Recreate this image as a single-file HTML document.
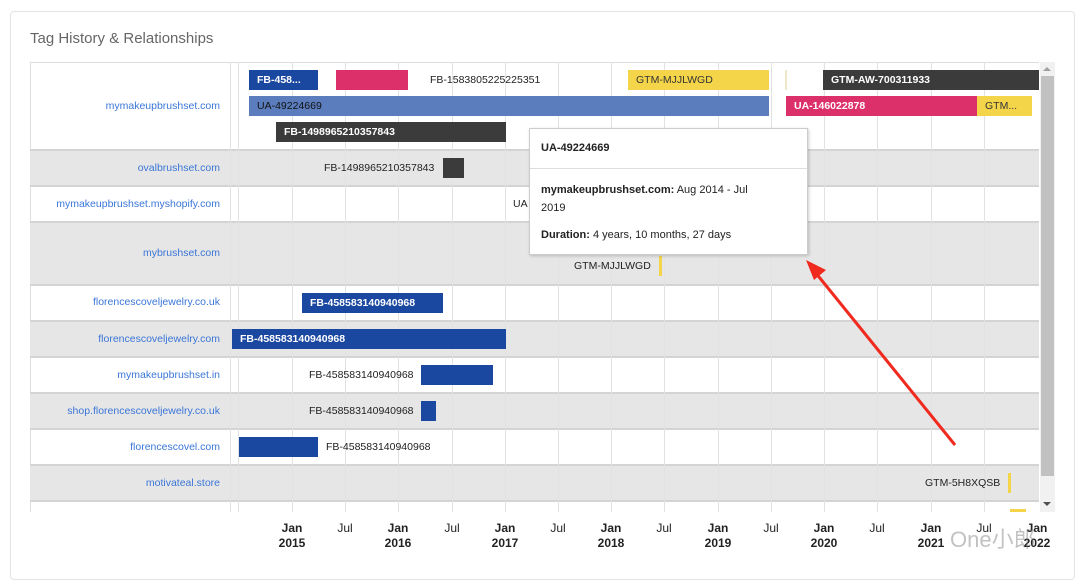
<!DOCTYPE html>
<html><head><meta charset="utf-8"><style>
*{margin:0;padding:0;box-sizing:border-box}
body{width:1080px;height:585px;background:#fff;font-family:"Liberation Sans",Arial,sans-serif;position:relative;overflow:hidden}
.a{position:absolute}
.card{left:10px;top:11px;width:1065px;height:569px;border:1px solid #e3e3e3;border-radius:4px}
.title{left:30px;top:30px;font-size:15px;color:#666}
.row{position:absolute;left:30px;width:1009px;border-bottom:2px solid #d4d4d4}
.g{background:#e6e6e6}
.lbl{position:absolute;font-size:10.5px;color:#3a76d8;white-space:nowrap}
.vl{position:absolute;top:62px;height:450px;width:1px;background:#e2e2e2}
.bar{position:absolute;height:20px;font-size:10.5px;font-weight:bold;color:#fff;padding-left:8px;line-height:21px;white-space:nowrap;overflow:hidden}
.t{position:absolute;font-size:10.5px;color:#222;white-space:nowrap}
.ax{position:absolute;top:521px;font-size:12px;font-weight:bold;color:#222;text-align:center;line-height:15px;width:40px}
.jl{position:absolute;top:521px;font-size:12px;color:#222;width:30px;text-align:center}
</style></head><body>
<div class="a card"></div>
<div class="a title">Tag History &amp; Relationships</div>
<div class="a" style="left:30px;top:62px;width:1009px;height:450px;border-top:1px solid #ddd;border-left:1px solid #ddd"></div>
<div class="row" style="top:62px;height:89px"></div>
<div class="row g" style="top:151px;height:36px"></div>
<div class="row" style="top:187px;height:36px"></div>
<div class="row g" style="top:223px;height:63px"></div>
<div class="row" style="top:286px;height:36px"></div>
<div class="row g" style="top:322px;height:36px"></div>
<div class="row" style="top:358px;height:36px"></div>
<div class="row g" style="top:394px;height:36px"></div>
<div class="row" style="top:430px;height:36px"></div>
<div class="row g" style="top:466px;height:36px"></div>
<div class="vl" style="left:230px"></div><div class="vl" style="left:238px"></div>
<div class="vl" style="left:292px"></div><div class="vl" style="left:345px"></div><div class="vl" style="left:398px"></div><div class="vl" style="left:452px"></div><div class="vl" style="left:505px"></div><div class="vl" style="left:558px"></div><div class="vl" style="left:611px"></div><div class="vl" style="left:664px"></div><div class="vl" style="left:718px"></div><div class="vl" style="left:771px"></div><div class="vl" style="left:824px"></div><div class="vl" style="left:877px"></div><div class="vl" style="left:931px"></div><div class="vl" style="left:984px"></div>
<div class="lbl" style="top:100px;right:860px">mymakeupbrushset.com</div>
<div class="lbl" style="top:162px;right:860px">ovalbrushset.com</div>
<div class="lbl" style="top:198px;right:860px">mymakeupbrushset.myshopify.com</div>
<div class="lbl" style="top:247px;right:860px">mybrushset.com</div>
<div class="lbl" style="top:296px;right:860px">florencescoveljewelry.co.uk</div>
<div class="lbl" style="top:333px;right:860px">florencescoveljewelry.com</div>
<div class="lbl" style="top:369px;right:860px">mymakeupbrushset.in</div>
<div class="lbl" style="top:405px;right:860px">shop.florencescoveljewelry.co.uk</div>
<div class="lbl" style="top:441px;right:860px">florencescovel.com</div>
<div class="lbl" style="top:477px;right:860px">motivateal.store</div>
<div class="bar" style="left:249px;top:70px;width:69px;background:#1a47a0">FB-458...</div>
<div class="bar" style="left:336px;top:70px;width:72px;background:#dc306a"></div>
<div class="t" style="left:430px;top:74px">FB-1583805225225351</div>
<div class="bar" style="left:628px;top:70px;width:141px;background:#f4d54a;color:#333;font-weight:normal">GTM-MJJLWGD</div>
<div class="a" style="left:785px;top:70px;width:2px;height:20px;background:#eee8c8"></div>
<div class="bar" style="left:823px;top:70px;width:216px;background:#3b3b3b">GTM-AW-700311933</div>
<div class="bar" style="left:249px;top:96px;width:520px;background:#5b7dbd;color:#111;font-weight:normal">UA-49224669</div>
<div class="bar" style="left:786px;top:96px;width:191px;background:#dc306a">UA-146022878</div>
<div class="bar" style="left:977px;top:96px;width:55px;background:#f4d54a;color:#333;font-weight:normal">GTM...</div>
<div class="bar" style="left:276px;top:122px;width:230px;background:#3b3b3b">FB-1498965210357843</div>
<div class="t" style="left:324px;top:162px">FB-1498965210357843</div>
<div class="a" style="left:443px;top:158px;width:21px;height:20px;background:#3b3b3b"></div>
<div class="t" style="left:513px;top:198px">UA</div>
<div class="t" style="left:574px;top:260px">GTM-MJJLWGD</div>
<div class="a" style="left:659px;top:256px;width:3px;height:20px;background:#f4d54a"></div>
<div class="bar" style="left:302px;top:293px;width:141px;background:#1a47a0">FB-458583140940968</div>
<div class="bar" style="left:232px;top:329px;width:274px;background:#1a47a0">FB-458583140940968</div>
<div class="t" style="left:309px;top:369px">FB-458583140940968</div>
<div class="a" style="left:421px;top:365px;width:72px;height:20px;background:#1a47a0"></div>
<div class="t" style="left:309px;top:405px">FB-458583140940968</div>
<div class="a" style="left:421px;top:401px;width:15px;height:20px;background:#1a47a0"></div>
<div class="a" style="left:239px;top:437px;width:79px;height:20px;background:#1a47a0"></div>
<div class="t" style="left:326px;top:441px">FB-458583140940968</div>
<div class="t" style="left:925px;top:477px">GTM-5H8XQSB</div>
<div class="a" style="left:1008px;top:473px;width:3px;height:20px;background:#f4d54a"></div>
<div class="a" style="left:1010px;top:509px;width:16px;height:3px;background:#f4d54a"></div>
<div class="a" style="left:1040px;top:62px;width:15px;height:450px;background:#f1f1f1"></div>
<div class="a" style="left:1041px;top:76px;width:13px;height:400px;background:#c1c1c1"></div>
<div class="a" style="left:1043px;top:67px;border:4px solid transparent;border-bottom:4px solid #a0a0a0;border-top:0"></div>
<div class="a" style="left:1043px;top:502px;border:4px solid transparent;border-top:4px solid #505050;border-bottom:0"></div>
<div class="a" style="left:529px;top:128px;width:279px;height:127px;background:#fff;border:1px solid #ccc;box-shadow:1px 1px 3px rgba(0,0,0,.2)">
<div style="position:absolute;left:11px;top:13px;font-size:11px;font-weight:bold;color:#222">UA-49224669</div>
<div style="position:absolute;left:0;top:39px;width:277px;height:1px;background:#ddd"></div>
<div style="position:absolute;left:11px;top:52px;width:230px;font-size:11px;color:#222;line-height:18px"><b>mymakeupbrushset.com:</b> Aug 2014 - Jul 2019</div>
<div style="position:absolute;left:11px;top:100px;font-size:11px;color:#222"><b>Duration:</b> 4 years, 10 months, 27 days</div>
</div>
<svg class="a" style="left:0;top:0" width="1080" height="585"><line x1="955" y1="445" x2="815" y2="272" stroke="#f02a1e" stroke-width="3"/><polygon points="806,260 826,270 814,280" fill="#f02a1e"/></svg>
<div class="ax" style="left:272px">Jan<br>2015</div><div class="jl" style="left:330px">Jul</div>
<div class="ax" style="left:378px">Jan<br>2016</div><div class="jl" style="left:437px">Jul</div>
<div class="ax" style="left:485px">Jan<br>2017</div><div class="jl" style="left:543px">Jul</div>
<div class="ax" style="left:591px">Jan<br>2018</div><div class="jl" style="left:649px">Jul</div>
<div class="ax" style="left:698px">Jan<br>2019</div><div class="jl" style="left:756px">Jul</div>
<div class="ax" style="left:804px">Jan<br>2020</div><div class="jl" style="left:862px">Jul</div>
<div class="ax" style="left:911px">Jan<br>2021</div><div class="jl" style="left:969px">Jul</div>
<div class="ax" style="left:1017px">Jan<br>2022</div>
<div class="a" style="left:950px;top:522px;font-size:22px;color:rgba(120,120,120,.45);font-family:'Liberation Sans','Noto Sans CJK SC',sans-serif">One小郎</div>
</body></html>
